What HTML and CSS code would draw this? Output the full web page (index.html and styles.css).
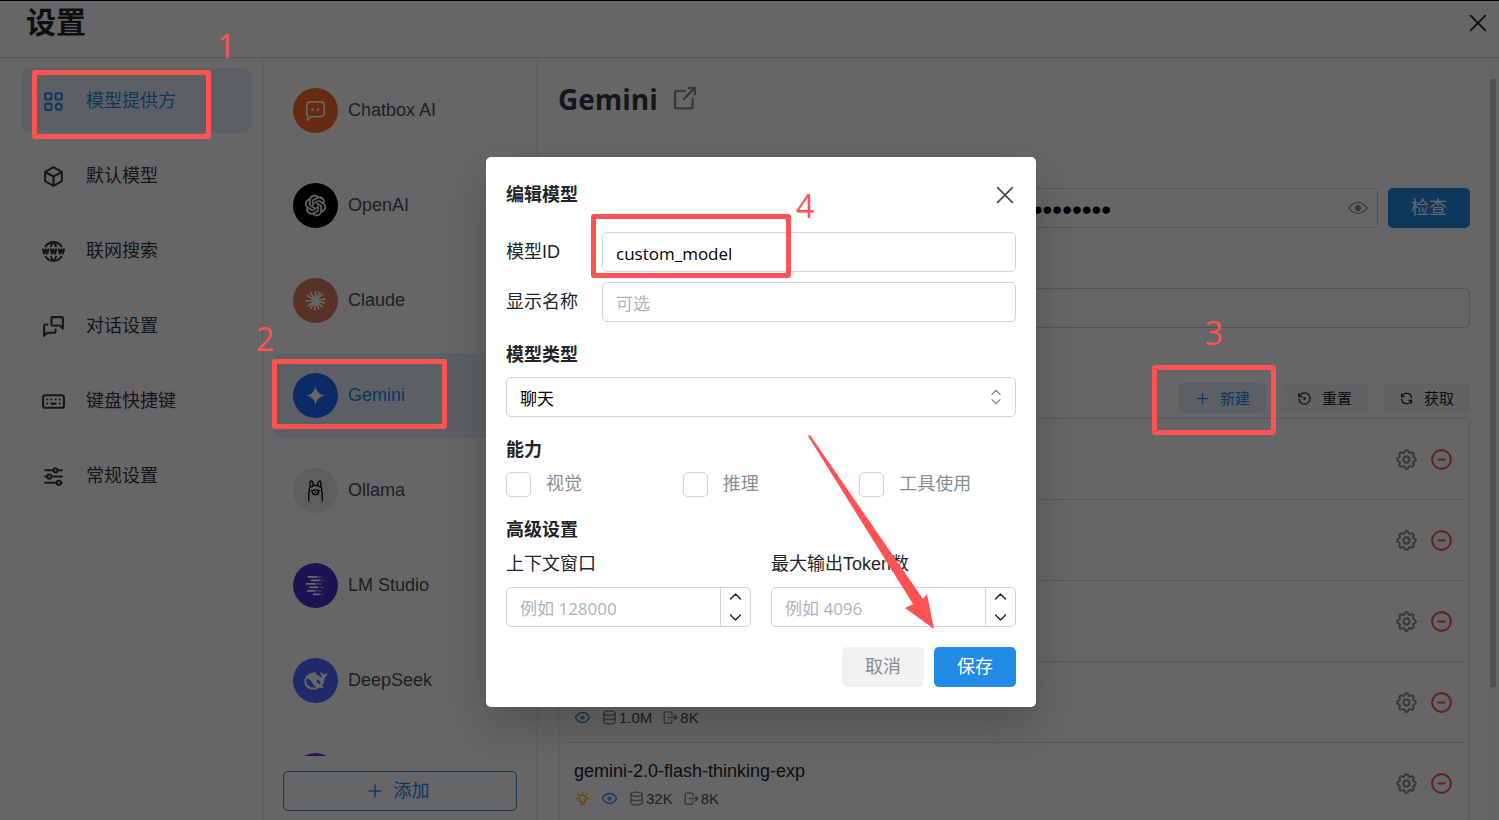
FILE: index.html
```html
<!DOCTYPE html>
<html lang="zh-CN">
<head>
    <meta charset="UTF-8">
    <meta name="viewport" content="width=device-width, initial-scale=1.0">
    <title>设置</title>
    <link rel="stylesheet" href="styles.css">
</head>
<body>
    <!-- Shared icons -->
    <svg class="sprite" aria-hidden="true">
        <symbol id="i-close" viewBox="0 0 24 24"><path d="M4 4l16 16M20 4L4 20"/></symbol>
        <symbol id="i-plus" viewBox="0 0 24 24"><path d="M12 4v16M4 12h16"/></symbol>
        <symbol id="i-eye" viewBox="0 0 24 24"><path d="M10 12a2 2 0 1 0 4 0a2 2 0 0 0-4 0"/><path d="M22 12c-2.700 4.700-6 7-10 7s-7.300-2.300-10-7c2.700-4.700 6-7 10-7s7.300 2.300 10 7"/></symbol>
        <symbol id="i-bulb" viewBox="0 0 24 24"><path d="M3 12h1M12 3v1M20 12h1M5.600 5.600l.7.7M18.400 5.600l-.7.7M9 16a5 5 0 1 1 6 0a3.500 3.500 0 0 0-1 3a2 2 0 0 1-4 0a3.500 3.500 0 0 0-1-3M9.700 17h4.600"/></symbol>
        <symbol id="i-db" viewBox="0 0 24 24"><ellipse cx="12" cy="6" rx="8" ry="3"/><path d="M4 6v6c0 1.700 3.600 3 8 3s8-1.300 8-3V6M4 12v6c0 1.700 3.600 3 8 3s8-1.300 8-3v-6"/></symbol>
        <symbol id="i-out" viewBox="0 0 24 24"><path d="M14 8V6a2 2 0 0 0-2-2H5a2 2 0 0 0-2 2v12a2 2 0 0 0 2 2h7a2 2 0 0 0 2-2v-2M9 12h12l-3-3M18 15l3-3"/></symbol>
        <symbol id="i-gear" viewBox="0 0 24 24"><path d="M10.325 4.317c.426-1.756 2.924-1.756 3.350 0a1.724 1.724 0 0 0 2.573 1.066c1.543-.94 3.310.826 2.370 2.370a1.724 1.724 0 0 0 1.065 2.572c1.756.426 1.756 2.924 0 3.350a1.724 1.724 0 0 0-1.066 2.573c.94 1.543-.826 3.310-2.370 2.370a1.724 1.724 0 0 0-2.572 1.065c-.426 1.756-2.924 1.756-3.350 0a1.724 1.724 0 0 0-2.573-1.066c-1.543.94-3.310-.826-2.370-2.370a1.724 1.724 0 0 0-1.065-2.572c-1.756-.426-1.756-2.924 0-3.350a1.724 1.724 0 0 0 1.066-2.573c-.94-1.543.826-3.310 2.370-2.370c1 .608 2.296.07 2.572-1.065"/><circle cx="12" cy="12" r="3"/></symbol>
        <symbol id="i-minus" viewBox="0 0 24 24"><circle cx="12" cy="12" r="9"/><path d="M9 12h6"/></symbol>
        <symbol id="i-up" viewBox="0 0 24 24"><path d="M5 14l7-7 7 7"/></symbol>
        <symbol id="i-down" viewBox="0 0 24 24"><path d="M5 10l7 7 7-7"/></symbol>
    </svg>

    <div class="page">
        <header class="header">
            <h1>设置</h1>
            <button class="icon-button" aria-label="关闭"><svg class="icon icon-close"><use href="#i-close"/></svg></button>
        </header>

        <div class="content">
            <nav class="sidebar">
                <a href="#" class="nav-item active">
                    <svg class="icon" viewBox="0 0 24 24"><rect x="4" y="4" width="6" height="6" rx="1"/><rect x="14" y="4" width="6" height="6" rx="1"/><rect x="4" y="14" width="6" height="6" rx="1"/><circle cx="17" cy="17" r="3"/></svg>
                    模型提供方
                </a>
                <a href="#" class="nav-item">
                    <svg class="icon" viewBox="0 0 24 24"><path d="M12 3l8 4.500v9L12 21l-8-4.500v-9zM12 12l8-4.500M12 12v9M12 12L4 7.500"/></svg>
                    默认模型
                </a>
                <a href="#" class="nav-item">
                    <svg class="icon" viewBox="0 0 24 24"><path d="M19.500 7A9 9 0 0 0 12 3a9 9 0 0 0-7.500 4M11.500 3a17 17 0 0 0-1.800 4M12.500 3a17 17 0 0 1 1.800 4M19.500 17a9 9 0 0 1-7.500 4a9 9 0 0 1-7.500-4M11.500 21a17 17 0 0 1-1.800-4M12.500 21a17 17 0 0 0 1.800-4M2 10l1 4 1.500-4L6 14l1-4M17 10l1 4 1.500-4 1.500 4 1-4M9.500 10l1 4 1.500-4 1.500 4 1-4"/></svg>
                    联网搜索
                </a>
                <a href="#" class="nav-item">
                    <svg class="icon" viewBox="0 0 24 24"><path d="M21 14l-3-3h-7a1 1 0 0 1-1-1V4a1 1 0 0 1 1-1h9a1 1 0 0 1 1 1zM14 15v2a1 1 0 0 1-1 1H6l-3 3V11a1 1 0 0 1 1-1h2"/></svg>
                    对话设置
                </a>
                <a href="#" class="nav-item">
                    <svg class="icon" viewBox="0 0 24 24"><rect x="2" y="6" width="20" height="12" rx="2"/><path d="M6 10v.01M10 10v.01M14 10v.01M18 10v.01M6 14v.01M18 14v.01M10 14h4"/></svg>
                    键盘快捷键
                </a>
                <a href="#" class="nav-item">
                    <svg class="icon" viewBox="0 0 24 24"><circle cx="14" cy="6" r="2"/><circle cx="8" cy="12" r="2"/><circle cx="17" cy="18" r="2"/><path d="M4 6h8M16 6h4M4 12h2M10 12h10M4 18h11M19 18h1"/></svg>
                    常规设置
                </a>
            </nav>

            <div class="providers">
                <div class="provider-list">
                    <a href="#" class="provider">
                        <span class="avatar chatbox"><svg viewBox="0 0 24 24"><path d="M6 2h12a4 4 0 0 1 4 4v9a4 4 0 0 1-4 4H7l-4 4v-5a4 4 0 0 1-1-3V6a4 4 0 0 1 4-4z" class="line"/><circle cx="8.500" cy="11" r="1.500"/><circle cx="15" cy="11" r="1.500"/></svg></span>
                        Chatbox AI
                    </a>
                    <a href="#" class="provider">
                        <span class="avatar openai"><svg viewBox="0 0 24 24"><path d="M22.282 9.821a5.985 5.985 0 0 0-.516-4.910 6.046 6.046 0 0 0-6.510-2.900A6.065 6.065 0 0 0 4.981 4.182a5.985 5.985 0 0 0-3.998 2.900 6.046 6.046 0 0 0 .743 7.097 5.980 5.980 0 0 0 .511 4.911 6.051 6.051 0 0 0 6.515 2.900A5.985 5.985 0 0 0 13.260 24a6.056 6.056 0 0 0 5.772-4.206 5.989 5.989 0 0 0 3.998-2.900 6.056 6.056 0 0 0-.748-7.073zM13.260 22.430a4.476 4.476 0 0 1-2.876-1.041l.142-.08 4.778-2.758a.795.795 0 0 0 .393-.681v-6.737l2.020 1.169a.071.071 0 0 1 .038.062v5.583a4.504 4.504 0 0 1-4.495 4.483zM3.600 18.304a4.471 4.471 0 0 1-.535-3.014l.142.085 4.783 2.758a.771.771 0 0 0 .781 0l5.843-3.369v2.332a.08.08 0 0 1-.033.062L9.740 19.950a4.499 4.499 0 0 1-6.140-1.646zM2.341 7.896a4.485 4.485 0 0 1 2.366-1.973V11.600a.766.766 0 0 0 .388.677l5.814 3.354-2.020 1.169a.076.076 0 0 1-.071 0l-4.830-2.787A4.504 4.504 0 0 1 2.341 7.872zm16.596 3.856l-5.833-3.388L15.119 7.200a.076.076 0 0 1 .071 0l4.830 2.791a4.494 4.494 0 0 1-.677 8.104v-5.677a.79.79 0 0 0-.406-.666zm2.011-3.023l-.142-.085-4.774-2.782a.776.776 0 0 0-.785 0L9.409 9.230V6.897a.066.066 0 0 1 .028-.062l4.830-2.787a4.499 4.499 0 0 1 6.681 4.681zM8.307 12.863l-2.020-1.164a.08.08 0 0 1-.038-.057V6.074a4.499 4.499 0 0 1 7.376-3.454l-.142.081L8.704 5.459a.795.795 0 0 0-.393.681zm1.097-2.365l2.602-1.500 2.607 1.500v2.999l-2.597 1.500-2.607-1.500z"/></svg></span>
                        OpenAI
                    </a>
                    <a href="#" class="provider">
                        <span class="avatar claude"><svg viewBox="0 0 24 24"><path class="ray" d="M12 12V1M12 12l5.500-10M12 12l8.500-7.500M12 12l11.500-1.500M12 12l11 3M12 12l8 7.500M12 12l4 10M12 12l-1 11.500M12 12l-6 9.500M12 12l-9 6.500M12 12L.5 12.500M12 12L2 6M12 12L6 2.500"/></svg></span>
                        Claude
                    </a>
                    <a href="#" class="provider active">
                        <span class="avatar gemini"><svg viewBox="0 0 24 24"><path d="M12 1c1 6.500 4.500 10 11 11c-6.500 1-10 4.500-11 11c-1-6.500-4.500-10-11-11c6.500-1 10-4.500 11-11z"/></svg></span>
                        Gemini
                    </a>
                    <a href="#" class="provider">
                        <span class="avatar ollama"><svg viewBox="0 0 24 24"><path class="thin" d="M4.500 24c-.8-2-.8-4 .3-5.500c-1-2-1-4 .4-5.500C4 10 5 7.500 8 7.500c2-2 6-2 8 0c3 0 4 2.500 2.800 5.500c1.400 1.500 1.400 3.500.4 5.500c1.100 1.500 1.100 3.500.3 5.500M6 8C5.500 4 5.800 1 7 1C8.500 1 9.300 3 9.300 6M18 8c.5-4 .2-7-1-7C15.500 1 14.700 3 14.700 6"/><ellipse class="thin" cx="12" cy="14" rx="3.600" ry="2.700"/><path class="thin" d="M12 13.800v.6M7.200 12v.1M16.800 12v.1"/></svg></span>
                        Ollama
                    </a>
                    <a href="#" class="provider">
                        <span class="avatar lmstudio"><svg viewBox="0 0 24 24"><path class="bar" d="M3 2h11M7 6h10M1 10h11M5 14h10M2 18h10M9 22h8"/><path class="bar faint" d="M14 2h5M17 6h6M12 10h7M15 14h7M12 18h7M17 22h4"/></svg></span>
                        LM Studio
                    </a>
                    <a href="#" class="provider">
                        <span class="avatar deepseek"><svg viewBox="0 0 24 24"><path fill-rule="evenodd" d="M23.700 4.300c-.3-.1-.5.2-.8.5c-.8.8-1.800.8-2.800.5c-.9-.3-1.600-1-1.900-2c-.3-.5-.8-.3-.9.200c-.4 1.700.1 3.300 1.400 4.400c-.4.6-.8.7-1.400.4c-1.700-1-3-2.400-4.800-3.100c-.8-.4-.6-1 0-1.300c.3-.3.1-.6-.8-.6C6 3.200.5 7 .3 13c-.1 5.200 4.600 8.500 9.500 8.500c3 0 5-.9 6.800-2.200c.9.5 2.200.8 3.300.5c.6-.3.5-.9 0-1.200c-.8-.3-1.200-.6-1.500-1c2.300-2.500 3-5.300 3-8.600c1.500-.5 2.800-2.200 2.600-4.300zM13.500 19.200c-2.800-1-3.600-2.800-4.800-4.700c-1.200-2-2.700-4.300-6-4.600c-1 3.400.2 6.500 3.200 8.300c1.800 1.100 5.100 1.600 7.600 1zM17 15.500c-1.500.6-3-.6-3.700-2.100c-.6-1.500.2-2.400 1.300-2.200c1.400.3 2.900 2.400 2.400 4.300z"/></svg></span>
                        DeepSeek
                    </a>
                    <a href="#" class="provider" aria-label="更多">
                        <span class="avatar more"></span>
                    </a>
                </div>
                <button class="add-button"><svg class="icon icon-medium"><use href="#i-plus"/></svg>添加</button>
            </div>

            <main class="main">
                <div class="provider-title">
                    <h2>Gemini</h2>
                    <a href="#" aria-label="打开官网"><svg class="icon icon-link" viewBox="0 0 24 24"><path d="M12 5H5a1.500 1.500 0 0 0-1.500 1.500v12A1.500 1.500 0 0 0 5 20h12a1.500 1.500 0 0 0 1.500-1.500V12M11 12l9.500-9.500M15 2.500h5.500V8"/></svg></a>
                </div>

                <div class="key-row">
                    <div class="key-field">
                        <input type="password" aria-label="API Key" value="0000000000000000000000000000000000000000000000000000000">
                        <button class="icon-button" aria-label="显示"><svg class="icon icon-view" viewBox="0 0 24 24"><path d="M23 12c-3 4.500-6.500 6.500-11 6.500S4 16.500 1 12c3-4.500 6.500-6.500 11-6.500S20 7.500 23 12z"/><circle class="pupil" cx="12" cy="12" r="3"/></svg></button>
                    </div>
                    <button class="button primary">检查</button>
                </div>

                <input class="text-input host-input" type="text" aria-label="API Host">

                <div class="model-actions">
                    <button class="small-button blue"><svg class="icon icon-action"><use href="#i-plus"/></svg>新建</button>
                    <button class="small-button"><svg class="icon icon-action" viewBox="0 0 24 24"><path d="M3 13a9 9 0 1 0 .5-4M3 4v5h5"/><circle class="pupil" cx="12" cy="12" r="1"/></svg>重置</button>
                    <button class="small-button"><svg class="icon icon-action" viewBox="0 0 24 24"><path d="M20 11A8 8 0 0 0 4.500 9M4 5v4h4M4 13a8 8 0 0 0 15.500 2M20 19v-4h-4"/></svg>获取</button>
                </div>

                <ul class="model-list" id="modelList">
                    <!-- Rows will be dynamically inserted here -->
                </ul>
                <div class="scrollbar"><div class="thumb"></div></div>
            </main>
        </div>
    </div>

    <div class="overlay">
        <form class="modal" role="dialog" aria-labelledby="modalTitle">
            <div class="modal-header">
                <h3 id="modalTitle">编辑模型</h3>
                <button type="button" class="icon-button" aria-label="关闭"><svg class="icon icon-close"><use href="#i-close"/></svg></button>
            </div>
            <div class="form-rows">
                <label for="modelId">模型ID</label>
                <input class="text-input" type="text" id="modelId" value="custom_model">
                <label for="modelName">显示名称</label>
                <input class="text-input" type="text" id="modelName" placeholder="可选">
            </div>
            <div class="form-group">
                <label class="group-title" for="modelType">模型类型</label>
                <div class="select-field">
                    <select class="text-input" id="modelType"><option>聊天</option></select>
                    <svg class="icon select-arrows" viewBox="0 0 24 24"><path d="M6 8l6-6 6 6M6 16l6 6 6-6"/></svg>
                </div>
            </div>
            <div class="form-group">
                <h3>能力</h3>
                <div class="checks">
                    <label><input type="checkbox">视觉</label>
                    <label><input type="checkbox">推理</label>
                    <label><input type="checkbox">工具使用</label>
                </div>
            </div>
            <div class="form-group">
                <h3>高级设置</h3>
                <div class="numbers">
                    <div class="form-group-inner">
                        <label for="contextWindow">上下文窗口</label>
                        <div class="number-field">
                            <input type="text" id="contextWindow" placeholder="例如 128000">
                            <div class="spinner">
                                <button type="button" aria-label="增加"><svg class="icon icon-chevron"><use href="#i-up"/></svg></button>
                                <button type="button" aria-label="减少"><svg class="icon icon-chevron"><use href="#i-down"/></svg></button>
                            </div>
                        </div>
                    </div>
                    <div class="form-group-inner">
                        <label for="maxOutput">最大输出Token数</label>
                        <div class="number-field">
                            <input type="text" id="maxOutput" placeholder="例如 4096">
                            <div class="spinner">
                                <button type="button" aria-label="增加"><svg class="icon icon-chevron"><use href="#i-up"/></svg></button>
                                <button type="button" aria-label="减少"><svg class="icon icon-chevron"><use href="#i-down"/></svg></button>
                            </div>
                        </div>
                    </div>
                </div>
            </div>
            <div class="form-actions">
                <button type="button" class="button">取消</button>
                <button type="button" class="button primary">保存</button>
            </div>

            <div class="mark mark-four"></div>
            <span class="step step-four">4</span>
            <svg class="arrow" viewBox="0 0 130 200"><path d="M3 4L5 3L118 167L122 162L129 197L100 176L108 172z"/></svg>
        </form>
    </div>

    <!-- Step marks -->
    <div class="mark mark-one"></div>
    <span class="step step-one">1</span>
    <div class="mark mark-two"></div>
    <span class="step step-two">2</span>
    <div class="mark mark-three"></div>
    <span class="step step-three">3</span>

    <script>
        const models = [
            { name: '', tags: [] },
            { name: '', tags: [] },
            { name: '', tags: [] },
            { name: '', tags: ['eye'], context: '1.0M', output: '8K' },
            { name: 'gemini-2.0-flash-thinking-exp', tags: ['bulb', 'eye'], context: '32K', output: '8K' }
        ];

        const icon = (id, cls) => `<svg class="icon ${cls}"><use href="#i-${id}"/></svg>`;

        document.getElementById('modelList').innerHTML = models.map(model => `
            <li>
                <div class="model-info">
                    <div class="model-name">${model.name}</div>
                    <div class="model-meta">
                        ${model.tags.map(tag => icon(tag, 'icon-small ' + tag)).join('')}
                        ${model.context ? `<span>${icon('db', 'icon-small')}${model.context}</span><span>${icon('out', 'icon-small')}${model.output}</span>` : ''}
                    </div>
                </div>
                <button class="icon-button" aria-label="设置">${icon('gear', 'gear')}</button>
                <button class="icon-button" aria-label="删除">${icon('minus', 'remove')}</button>
            </li>
        `).join('');
    </script>
</body>
</html>
```
FILE: styles.css
```css
/* General Styles */
* {
    box-sizing: border-box;
}

body {
    margin: 0;
    height: 100vh;
    overflow: hidden;
    position: relative;
    font-family: "Liberation Sans", "Noto Sans CJK SC", sans-serif;
    font-size: 18px;
    line-height: 25px;
    color: #212529;
    background-color: #ffffff;
}

h1, h2, h3, ul {
    margin: 0;
    padding: 0;
}

h3, .group-title {
    padding-top: 2px;
    font-size: 18px;
    line-height: 23px;
    font-weight: bold;
}

a {
    color: inherit;
    text-decoration: none;
}

button, input, select {
    font: inherit;
    color: inherit;
}

button {
    padding: 0;
    border: none;
    background: none;
    cursor: pointer;
}

.sprite {
    display: none;
}

/* Icons */
.icon {
    width: 25px;
    height: 25px;
    flex: none;
    display: block;
    fill: none;
    stroke: currentColor;
    stroke-width: 2;
    stroke-linecap: round;
    stroke-linejoin: round;
}

.icon-close {
    width: 22px;
    height: 22px;
    color: #495057;
}

.icon-medium {
    width: 18px;
    height: 18px;
}

.icon-action {
    width: 15px;
    height: 15px;
}

.icon-small {
    width: 17px;
    height: 17px;
    color: #868e96;
}

.icon-view {
    width: 20px;
    height: 20px;
    stroke-width: 1.5;
    color: #868e96;
}

.icon-link {
    width: 28px;
    height: 28px;
    color: #868e96;
}

.pupil {
    fill: currentColor;
}

.icon-button {
    display: block;
}

/* Page */
.page {
    display: flex;
    flex-direction: column;
    height: 100%;
    border-top: 1px solid #000000;
}

.header {
    display: flex;
    align-items: center;
    justify-content: space-between;
    height: 57px;
    padding: 0 10px 13px 26px;
    border-bottom: 1px solid #dee2e6;
}

.header h1 {
    font-size: 30px;
    line-height: 45px;
}

.header .icon-close {
    color: #212529;
}

.content {
    display: flex;
    flex: 1;
    min-height: 0;
}

/* Sidebar */
.sidebar {
    display: flex;
    flex-direction: column;
    gap: 10px;
    width: 263px;
    flex: none;
    padding: 10px 10px 10px 21px;
    border-right: 1px solid #dee2e6;
}

.nav-item {
    display: flex;
    align-items: center;
    gap: 20px;
    height: 65px;
    padding: 1px 20px 0;
    border-radius: 10px;
    color: #343a40;
}

.nav-item .icon {
    color: #343a40;
}

.active, .nav-item.active .icon {
    color: #228be6;
}

.active {
    background-color: #e7f1fd;
}

/* Providers */
.providers {
    display: flex;
    flex-direction: column;
    width: 275px;
    flex: none;
    border-right: 1px solid #dee2e6;
}

.provider-list {
    display: flex;
    flex-direction: column;
    gap: 10px;
    flex: 1;
    min-height: 0;
    overflow: hidden;
    padding: 10px 10px 0;
}

.provider {
    display: flex;
    align-items: center;
    gap: 10px;
    height: 85px;
    flex: none;
    padding: 0 20px;
    border-radius: 10px;
}

.provider:not(.active) {
    color: #495057;
}

.avatar {
    display: flex;
    align-items: center;
    justify-content: center;
    width: 45px;
    height: 45px;
    border-radius: 50%;
    color: #ffffff;
}

.avatar svg {
    width: 21px;
    height: 21px;
    overflow: visible;
    fill: currentColor;
}

.avatar.deepseek svg {
    width: 23px;
    height: 23px;
}

.avatar.openai svg {
    stroke: currentColor;
    stroke-width: 0.6;
}

.avatar .line {
    fill: none;
    stroke: currentColor;
    stroke-width: 2;
}

.avatar .ray {
    stroke: currentColor;
    stroke-width: 2;
}

.avatar .thin {
    fill: none;
    stroke: #000000;
    stroke-width: 1.5;
    stroke-linecap: round;
}

.avatar .bar {
    stroke: currentColor;
    stroke-width: 2;
}

.avatar .faint {
    opacity: 0.4;
}

.chatbox { background-color: #ff6a2b; }
.openai { background-color: #000000; }
.claude { background-color: #e07a5f; }
.gemini { background-color: #1c69ff; }
.ollama { background-color: #ebebeb; }
.lmstudio { background-color: #4a30c8; }
.deepseek { background-color: #4d6bfe; }
.more { background-color: #7c2ae8; }

.add-button {
    display: flex;
    align-items: center;
    justify-content: center;
    gap: 10px;
    height: 40px;
    margin: 15px 20px 9px;
    padding-right: 5px;
    border: 1px solid #228be6;
    border-radius: 5px;
    color: #228be6;
}

/* Main */
.main {
    position: relative;
    flex: 1;
    min-width: 0;
    overflow: hidden;
    padding: 20px 29px 0 20px;
}

.provider-title {
    display: flex;
    align-items: center;
    gap: 13px;
    height: 42px;
}

.provider-title h2 {
    font-family: "Open Sans", sans-serif;
    font-size: 28px;
    line-height: 42px;
    color: #343a40;
}

.key-row {
    display: flex;
    gap: 10px;
    margin-top: 68px;
}

.key-field {
    display: flex;
    align-items: center;
    flex: 1;
    height: 40px;
    padding: 0 9px 0 13px;
    border: 1px solid #ced4da;
    border-radius: 5px;
}

.key-field input {
    flex: 1;
    min-width: 0;
    padding: 4px 0 0;
    border: none;
    outline: none;
    background: none;
    font-family: "Liberation Sans", sans-serif;
    font-size: 28px;
    color: #000000;
}

.text-input {
    width: 100%;
    height: 40px;
    padding: 2px 13px 0;
    border: 1px solid #ced4da;
    border-radius: 5px;
    outline: none;
    background-color: #ffffff;
    font-family: "Open Sans", "Noto Sans CJK SC", sans-serif;
    font-size: 17px;
    color: #000000;
}

::placeholder {
    color: #adb5bd;
    opacity: 1;
}

.host-input {
    display: block;
    margin-top: 60px;
}

.button {
    width: 82px;
    height: 40px;
    border-radius: 5px;
    background-color: #f2f2f2;
    color: #868e96;
}

.primary {
    background-color: #228be6;
    color: #ffffff;
}

.model-actions {
    display: flex;
    justify-content: flex-end;
    gap: 15px;
    margin: 55px 0 5px;
}

.small-button {
    display: flex;
    align-items: center;
    justify-content: center;
    gap: 10px;
    width: 87px;
    height: 30px;
    border-radius: 5px;
    background-color: #f4f4f4;
    font-size: 15px;
}

.small-button.blue {
    background-color: #e7f1fd;
    color: #228be6;
}

/* Model list */
.model-list {
    list-style: none;
    padding: 0 5px;
    border: 1px solid #dee2e6;
    border-radius: 5px;
}

.model-list li {
    display: flex;
    align-items: center;
    gap: 10px;
    height: 81px;
    padding: 0 10px;
    border-bottom: 1px solid #dee2e6;
}

.model-info {
    flex: 1;
    padding-top: 3px;
}

.model-name {
    height: 28px;
    line-height: 28px;
}

.model-meta {
    display: flex;
    align-items: center;
    gap: 10px;
    height: 28px;
    font-size: 15px;
    color: #495057;
}

.model-meta span {
    display: flex;
    align-items: center;
    gap: 1px;
}

.eye {
    color: #228be6;
}

.bulb {
    color: #fab005;
}

.gear {
    color: #868e96;
}

.remove {
    color: #fa5252;
}

.scrollbar {
    position: absolute;
    top: 0;
    right: 3px;
    bottom: 0;
    width: 6px;
    padding-top: 21px;
    background-color: #fafafa;
}

.thumb {
    height: 82%;
    background-color: #c8c8c8;
}

/* Modal */
.overlay {
    position: absolute;
    inset: 0;
    display: flex;
    align-items: center;
    justify-content: center;
    padding: 44px 0 0 23px;
    background-color: rgba(0, 0, 0, 0.6);
}

.modal {
    position: relative;
    display: flex;
    flex-direction: column;
    gap: 20px;
    width: 550px;
    padding: 20px;
    border-radius: 5px;
    background-color: #ffffff;
    box-shadow: 0 20px 45px rgba(0, 0, 0, 0.2);
}

.modal-header {
    display: flex;
    align-items: center;
    justify-content: space-between;
    height: 35px;
}

.form-rows {
    display: grid;
    grid-template-columns: 96px 1fr;
    row-gap: 10px;
    align-items: center;
}

.form-group, .form-group-inner {
    display: flex;
    flex-direction: column;
    gap: 10px;
    min-width: 0;
}

.select-field {
    position: relative;
}

.select-field select {
    display: block;
    appearance: none;
}

.select-arrows {
    position: absolute;
    top: 12px;
    right: 12px;
    width: 16px;
    height: 16px;
    color: #868e96;
    pointer-events: none;
}

.checks {
    display: grid;
    grid-template-columns: repeat(3, 1fr);
    gap: 20px;
}

.checks label {
    display: flex;
    align-items: center;
    gap: 15px;
    color: #868e96;
}

.checks input {
    appearance: none;
    width: 25px;
    height: 25px;
    margin: 0;
    border: 1px solid #ced4da;
    border-radius: 5px;
}

.numbers {
    display: grid;
    grid-template-columns: repeat(2, 1fr);
    gap: 20px;
}

.number-field {
    display: flex;
    height: 40px;
    border: 1px solid #ced4da;
    border-radius: 5px;
}

.number-field input {
    flex: 1;
    min-width: 0;
    padding: 2px 13px 0;
    border: none;
    outline: none;
    background: none;
    font-family: "Open Sans", "Noto Sans CJK SC", sans-serif;
    font-size: 17px;
}

.spinner {
    display: flex;
    flex-direction: column;
    width: 30px;
    border-left: 1px solid #ced4da;
}

.spinner button {
    display: flex;
    align-items: center;
    justify-content: center;
    flex: 1;
}

.icon-chevron {
    width: 17px;
    height: 17px;
}

.form-actions {
    display: flex;
    justify-content: flex-end;
    gap: 10px;
}

/* Step marks */
.mark {
    position: absolute;
    border: 5px solid #ff5252;
    border-radius: 3px;
    pointer-events: none;
}

.step {
    position: absolute;
    font-family: "Open Sans", sans-serif;
    font-size: 32px;
    line-height: 32px;
    color: #ff5252;
}

.mark-one { left: 32px; top: 70px; width: 179px; height: 69px; }
.step-one { left: 217px; top: 30px; }
.mark-two { left: 272px; top: 359px; width: 175px; height: 70px; }
.step-two { left: 256px; top: 323px; }
.mark-three { right: 223px; top: 365px; width: 124px; height: 70px; }
.step-three { right: 276px; top: 317px; }
.mark-four { left: 105px; top: 57px; width: 200px; height: 64px; }
.step-four { left: 310px; top: 33px; }

.arrow {
    position: absolute;
    left: 319px;
    top: 275px;
    width: 130px;
    height: 200px;
    fill: #ff5252;
    pointer-events: none;
}
```
